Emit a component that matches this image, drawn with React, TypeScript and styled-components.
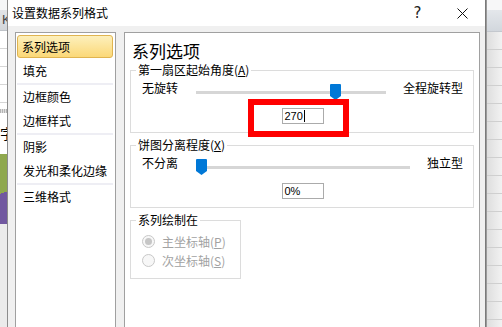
import React from 'react';
import styled, {createGlobalStyle, css} from 'styled-components';

const GlobalStyle = createGlobalStyle`
  *, *::before, *::after {
    box-sizing: border-box;
  }
  html, body {
    margin: 0;
    padding: 0;
  }
  body {
    width: 502px;
    height: 327px;
    overflow: hidden;
    background: #fff;
    color: #000;
    font-family: "Noto Sans CJK SC", "Noto Sans", sans-serif;
    font-size: 12px;
  }
`

const Screen = styled.div`
  display: flex;
  width: 502px;
  height: 327px;
  overflow: hidden;
`

// spreadsheet visible behind the dialog
const SheetLeft = styled.div`
  width: 7px;
  display: flex;
  flex-direction: column;
  overflow: hidden;
  background: #ebebeb;
`

const SheetTop = styled.div`
  height: 10px;
  background: #f5f6f7;
`

const SheetHeader = styled.div`
  height: 21px;
  padding-left: 2px;
  background: linear-gradient(#e2e4e7, #d3d6da);
  border-bottom: 1px solid #bfc3c8;
  font: 13px/20px "Liberation Sans", sans-serif;
  color: #444;
  white-space: nowrap;
`

const SheetCells = styled.div<{$height: number}>`
  height: ${p => p.$height}px;
  background: repeating-linear-gradient(to bottom, #fff 0 17px, #d6d6d6 17px 18px);
`

const SheetDots = styled.div`
  height: 4px;
  background: repeating-linear-gradient(to right, #b4b4b4 0 1px, #e0e0e0 1px 2px);
`

const SheetText = styled.div`
  height: 41px;
  padding-top: 10px;
  background: #fff;
  font-size: 14px;
  line-height: 20px;
  white-space: nowrap;
`

const ChartSlice = styled.div`
  height: 70px;
  background: linear-gradient(160deg, #8fa84e 0 55%, #7158a0 55% 100%);
`

const SheetRight = styled.div`
  flex: 1;
  display: flex;
  flex-direction: column;
  border-left: 1px solid #9a9a9a;
  background: linear-gradient(to right, #dedede, #f2f2f2);
`

const SheetRightTop = styled.div`
  height: 10px;
  background: #f7f7f8;
`

const SheetRightHeader = styled.div`
  height: 22px;
  background: linear-gradient(#e4e7eb, #d2d7dd);
  border-bottom: 1px solid #c4c8ce;
`

const SheetRightCells = styled.div`
  flex: 1;
  background: repeating-linear-gradient(to bottom, transparent 0 17px, #cfcfcf 17px 18px);
`

// dialog
const Dialog = styled.div`
  width: 479px;
  display: flex;
  flex-direction: column;
  background: #f0f0f0;
  border-left: 1px solid #8c8c8c;
  border-right: 1px solid #7a7a7a;
`

const TitleBar = styled.div`
  height: 26px;
  display: flex;
  align-items: center;
  background: #fff;
`

const Title = styled.div`
  flex: 1;
  padding-left: 4px;
  font-size: 12px;
  line-height: 26px;
`

const TitleButton = styled.div`
  width: 45px;
  height: 26px;
  display: flex;
  align-items: center;
  justify-content: center;
  font: 15px/26px "DejaVu Sans", sans-serif;
  color: #222;
`

const Body = styled.div`
  flex: 1;
  display: flex;
  gap: 8px;
  padding: 6px 5px 0 7px;
  min-height: 0;
`

const Nav = styled.div`
  width: 101px;
  display: flex;
  flex-direction: column;
  background: #fff;
  border: 1px solid #a0a0a0;
  border-bottom: none;
`

const NavItem = styled.div<{$active?: boolean}>`
  height: 24px;
  margin: 0 2px 0 1px;
  padding-left: 6px;
  font-size: 12px;
  line-height: 24px;
  white-space: nowrap;
  ${p => p.$active && css`
    height: 23px;
    margin-top: 2px;
    margin-bottom: 1px;
    padding-left: 4px;
    line-height: 21px;
    border: 1px solid #e0b450;
    border-radius: 3px;
    background: linear-gradient(#fdf0bc, #fbd878);
  `}
`

const NavSeparator = styled.div`
  height: 2px;
  margin: 0 2px 0 1px;
  background: #eeeef4;
`

const Panel = styled.div`
  flex: 1;
  display: flex;
  flex-direction: column;
  align-items: stretch;
  padding: 0 5px;
  background: #fff;
  border: 1px solid #a0a0a0;
  border-bottom: none;
`

const Heading = styled.div`
  margin: 7px 0 0 2px;
  font-size: 17px;
  line-height: 22px;
`

const Group = styled.fieldset<{$width?: number}>`
  min-width: 0;
  margin: 0;
  padding: 0 10px 8px 11px;
  border: 1px solid #dcdcdc;
  ${p => p.$width && css`
    width: ${p.$width}px;
    align-self: flex-start;
  `}
  & + & {
    margin-top: 4px;
  }
`

const Legend = styled.legend`
  margin-left: -6px;
  padding: 0 2px;
  font-size: 12px;
  line-height: 16px;
`

const SliderRow = styled.div`
  display: flex;
  align-items: flex-start;
  height: 16px;
  margin-top: 2px;
`

const EndLabel = styled.span<{$side: 'left' | 'right'}>`
  line-height: 16px;
  white-space: nowrap;
  ${p => p.$side === 'left' ? css`width: 54px;` : css`margin-left: 17px;`}
`

const Track = styled.div`
  position: relative;
  flex: 1;
  height: 3px;
  margin-top: 11px;
  background: #d6d6d6;
`

const Thumb = styled.svg`
  position: absolute;
  top: -7px;
`

const ValueRow = styled.div`
  display: flex;
  justify-content: center;
  margin-top: 12px;
`

const ValueBox = styled.div`
  position: relative;
  width: 42px;
  height: 16px;
  display: flex;
  align-items: center;
  padding-left: 2px;
  border: 1px solid #ababab;
  font: 11px/14px "Liberation Sans", sans-serif;
`

const Caret = styled.span`
  width: 1px;
  height: 12px;
  margin-left: 1px;
  background: #000;
`

// red annotation drawn over the screenshot
const Highlight = styled.div`
  position: absolute;
  left: -35px;
  top: -10px;
  width: 101px;
  height: 38px;
  border: 6px solid #ff0000;
`

const RadioRow = styled.label`
  display: flex;
  align-items: center;
  gap: 7px;
  height: 19px;
  color: #a2a2a2;
  white-space: nowrap;
  &:first-of-type {
    margin-top: 4px;
  }
`

const RadioCircle = styled.span<{$checked?: boolean}>`
  width: 13px;
  height: 13px;
  display: flex;
  align-items: center;
  justify-content: center;
  border: 1px solid #c8c8c8;
  border-radius: 50%;
  background: #f7f7f7;
  &::after {
    content: "";
    width: 7px;
    height: 7px;
    border-radius: 50%;
    background: ${p => p.$checked ? '#c6c6c6' : 'transparent'};
  }
`

const Slider = ({value, max, left, right}: {value: number, max: number, left: string, right: string}) => (
    <SliderRow>
        <EndLabel $side="left">{left}</EndLabel>
        <Track>
            <Thumb width={11} height={16} viewBox="0 0 11 16"
                   style={{left: `calc((100% - 11px) * ${value / max})`}}>
                <path d="M1 0 H10 Q11 0 11 1 V12 L5.5 16 L0 12 V1 Q0 0 1 0 Z" fill="#0078d7"/>
            </Thumb>
        </Track>
        <EndLabel $side="right">{right}</EndLabel>
    </SliderRow>
);

const navGroups = [
    ['系列选项', '填充'],
    ['边框颜色', '边框样式'],
    ['阴影', '发光和柔化边缘'],
    ['三维格式'],
];

const App = () => (
    <>
        <GlobalStyle/>
        <Screen>
            <SheetLeft>
                <SheetTop/>
                <SheetHeader>K</SheetHeader>
                <SheetCells $height={78}/>
                <SheetDots/>
                <SheetText>字</SheetText>
                <ChartSlice/>
            </SheetLeft>

            <Dialog>
                <TitleBar>
                    <Title>设置数据系列格式</Title>
                    <TitleButton>?</TitleButton>
                    <TitleButton>
                        <svg width={11} height={11} viewBox="0 0 11 11">
                            <path d="M0.5 0.5 L10.5 10.5 M10.5 0.5 L0.5 10.5" stroke="#111" strokeWidth={1}/>
                        </svg>
                    </TitleButton>
                </TitleBar>

                <Body>
                    <Nav>
                        {navGroups.map((group, gi) => (
                            <React.Fragment key={gi}>
                                {gi > 0 && <NavSeparator/>}
                                {group.map(item =>
                                    <NavItem key={item} $active={item === '系列选项'}>{item}</NavItem>
                                )}
                            </React.Fragment>
                        ))}
                    </Nav>

                    <Panel>
                        <Heading>系列选项</Heading>

                        <Group>
                            <Legend>第一扇区起始角度(<u>A</u>)</Legend>
                            <Slider value={270} max={360} left="无旋转" right="全程旋转型"/>
                            <ValueRow>
                                <ValueBox>
                                    270<Caret/>
                                    <Highlight/>
                                </ValueBox>
                            </ValueRow>
                        </Group>

                        <Group>
                            <Legend>饼图分离程度(<u>X</u>)</Legend>
                            <Slider value={0} max={400} left="不分离" right="独立型"/>
                            <ValueRow>
                                <ValueBox>0%</ValueBox>
                            </ValueRow>
                        </Group>

                        <Group $width={111}>
                            <Legend>系列绘制在</Legend>
                            <RadioRow>
                                <RadioCircle $checked/>
                                <span>主坐标轴(<u>P</u>)</span>
                            </RadioRow>
                            <RadioRow>
                                <RadioCircle/>
                                <span>次坐标轴(<u>S</u>)</span>
                            </RadioRow>
                        </Group>
                    </Panel>
                </Body>
            </Dialog>

            <SheetRight>
                <SheetRightTop/>
                <SheetRightHeader/>
                <SheetRightCells/>
            </SheetRight>
        </Screen>
    </>
);

export default App;
